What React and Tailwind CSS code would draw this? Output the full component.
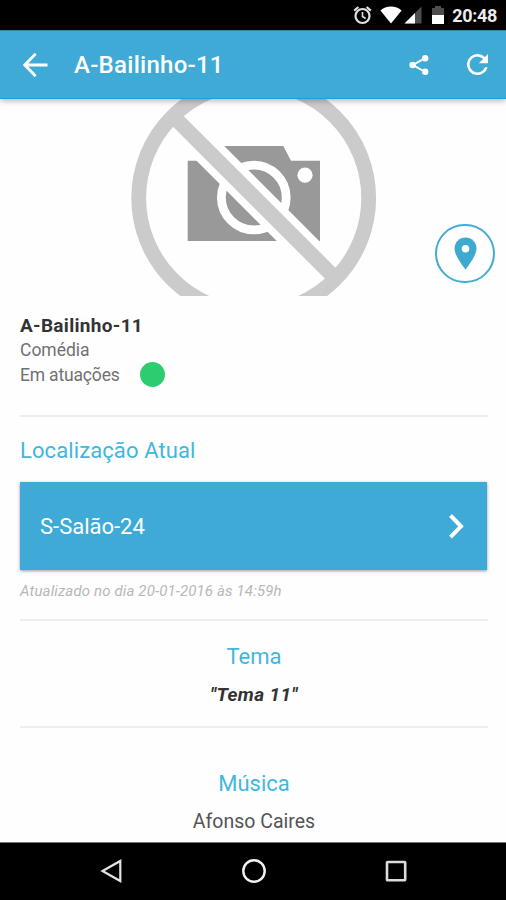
function StatusBar() {
  return (
    <div className="flex h-[30px] shrink-0 items-center justify-end bg-black pr-[9px] text-white">
      {/* Alarm */}
      <svg className="mr-[8px] h-[20px] w-[19px]" viewBox="0 0 19 20" fill="none" stroke="#e0e0e0">
        <circle cx="9.5" cy="11" r="7" strokeWidth="2.2" />
        <path d="M1.2 5.6 5.4 2M17.8 5.6 13.6 2" strokeWidth="2.2" />
        <path d="M9.5 7v4.5l3.2 2" strokeWidth="1.6" />
      </svg>
      {/* Wifi */}
      <svg className="h-[18px] w-[22px]" viewBox="0 0 22 18" fill="#fff">
        <path d="M11 17.6.4 4.5C3.2 1.9 7 .6 11 .6s7.8 1.3 10.6 3.9z" />
      </svg>
      {/* Signal */}
      <svg className="ml-[2px] h-[18px] w-[18px]" viewBox="0 0 18 18">
        <path d="M17.5.5v17H.5z" fill="#4d4d4d" />
        <path d="M11 7v10.5H.5z" fill="#fff" />
      </svg>
      {/* Battery */}
      <svg className="ml-[10px] h-[18px] w-[12px]" viewBox="0 0 12 18">
        <path d="M3 0h6v2h3v7H0V2h3z" fill="#4d4d4d" />
        <path d="M0 9h12v9H0z" fill="#fff" />
      </svg>
      <span className="ml-[8px] mt-[2px] text-[18px] font-bold leading-none tracking-[-0.35px] text-[#ececec]">20:48</span>
    </div>
  );
}

function Header() {
  return (
    <header className="relative z-10 flex h-[69px] shrink-0 items-center border-b border-[#1ba3d0] border-t border-t-[#3289ad] bg-[#3eaad5] pl-[23px] pr-[18px] text-white shadow-[0_2px_6px_rgba(0,0,0,0.28)]">
      <svg className="h-[26px] w-[25px]" viewBox="0 0 25 26" fill="none" stroke="#fff" strokeWidth="2.8">
        <path d="M24.5 13H2M12.7 1.8 1.8 13l10.9 11.2" />
      </svg>
      <h1 className="ml-[26px] mt-[1px] text-[24px] font-medium leading-none tracking-[0.27px]">A-Bailinho-11</h1>
      {/* Share */}
      <svg className="ml-auto h-[22px] w-[20px]" viewBox="0 0 20 22" fill="#fff">
        <path d="M16 4.2 4 11l12 6.8" fill="none" stroke="#fff" strokeWidth="2" />
        <circle cx="16.2" cy="4.2" r="3.2" />
        <circle cx="3.6" cy="11" r="3.2" />
        <circle cx="16.2" cy="17.8" r="3.2" />
      </svg>
      {/* Refresh */}
      <svg className="ml-[38px] h-[21px] w-[21px]" viewBox="4 4 16 16" fill="#fff">
        <path d="M17.65 6.35A7.958 7.958 0 0 0 12 4a8 8 0 1 0 7.73 10h-2.08A6 6 0 1 1 12 6c1.66 0 3.14.69 4.22 1.78L13 11h7V4z" />
      </svg>
    </header>
  );
}

function PhotoPlaceholder() {
  return (
    <div className="relative h-[197px] shrink-0">
      <svg className="block h-[197px] w-[506px]" viewBox="0 99 506 197">
        <path d="M187.7 160.7H218l-8-14.7h73.3l7.7 14.700h29V241H187.7z" fill="#999" />
        <circle cx="253.8" cy="197.5" r="32.4" fill="none" stroke="#fff" strokeWidth="8.8" />
        <circle cx="305" cy="175.2" r="7.6" fill="#fff" />
        <path d="M170 113 337 280" stroke="#fff" strokeWidth="30" />
        <path d="M170 113 337 280" stroke="#cbcbcb" strokeWidth="15.2" />
        <circle cx="253.7" cy="198" r="115" fill="none" stroke="#cbcbcb" strokeWidth="14.8" />
      </svg>
      <button className="absolute left-[435px] top-[125px] flex h-[59px] w-[60px] items-center justify-center rounded-full border-2 border-[#45abd0] bg-white">
        <svg className="h-[33px] w-[23px]" viewBox="0 0 23 33">
          <path d="M11.5.5C5.4.5.5 5.300.5 11.5c0 7.8 11 21 11 21s11-13.2 11-21c0-6.2-4.9-11-11-11z" fill="#3eaad0" />
          <circle cx="11.500" cy="11.8" r="3.8" fill="#fff" />
        </svg>
      </button>
    </div>
  );
}

function NavBar() {
  return (
    <nav className="flex h-[58px] shrink-0 items-center justify-between border-t border-[#777] bg-black pl-[100px] pr-[98px]">
      <svg className="-mt-[2px] h-[26px] w-[24px]" viewBox="0 0 24 26" fill="none" stroke="#e4e4e4" strokeWidth="2.2">
        <path d="M20.3 3v20L2.5 13z" />
      </svg>
      <svg className="-mt-[2px] h-[26px] w-[26px]" viewBox="0 0 26 26" fill="none" stroke="#f2f2f2" strokeWidth="2.4">
        <circle cx="13" cy="13" r="10.7" />
      </svg>
      <svg className="-mt-[2px] h-[24px] w-[24px]" viewBox="0 0 24 24" fill="none" stroke="#dcdcdc" strokeWidth="2.6">
        <rect x="3" y="3" width="18.2" height="18.2" rx="0.5" />
      </svg>
    </nav>
  );
}

export default function App() {
  return (
    <div className="flex h-[900px] w-[506px] flex-col overflow-hidden bg-[#fefefe] font-['Roboto',sans-serif]">
      <StatusBar />
      <Header />
      <PhotoPlaceholder />

      <main className="flex min-h-0 flex-1 flex-col pl-5 pr-[18px]">
        <section className="h-[121px] shrink-0 border-b-2 border-[#eeeeee] pt-[17px] text-[17.5px] leading-[24px] text-[#717171]">
          <h2 className="text-[19px] font-bold leading-[25px] tracking-[0.32px] text-[#333]">A-Bailinho-11</h2>
          <p>Comédia</p>
          <div className="flex items-center">
            <span className="tracking-[-0.17px]">Em atuações</span>
            <span className="ml-[20px] h-[25px] w-[25px] rounded-full bg-[#2ecc71]" />
          </div>
        </section>

        <section className="h-[204px] shrink-0 border-b-2 border-[#eeeeee] pt-[20px]">
          <h3 className="text-[22px] leading-[28px] tracking-[0.1px] text-[#42b7dc]">Localização Atual</h3>
          <button className="mt-[17px] flex h-[88px] w-[467px] items-center justify-between bg-[#3eaad5] pl-5 pr-[22px] text-[22px] text-white shadow-[0_1px_3px_rgba(0,0,0,0.4)]">
            <span>S-Salão-24</span>
            <svg className="h-[27px] w-[17px]" viewBox="0 0 17 27" fill="none" stroke="#fff" strokeWidth="4">
              <path d="M2.5 2.5 13 13.3 2.5 24.2" />
            </svg>
          </button>
          <p className="mt-[12px] text-[15px] italic leading-[18px] tracking-[0.14px] text-[#b8b8b8]">Atualizado no dia 20-01-2016 às 14:59h</p>
        </section>

        <section className="h-[107px] shrink-0 border-b-2 border-[#eeeeee] pt-[22px] text-center">
          <h3 className="text-[22px] leading-[28px] text-[#42b7dc]">Tema</h3>
          <p className="mt-[12px] text-[19px] font-bold italic leading-[24px] tracking-[0.4px] text-[#333]">"Tema 11"</p>
        </section>

        <section className="pt-[42px] text-center">
          <h3 className="text-[22px] leading-[28px] text-[#42b7dc]">Música</h3>
          <p className="mt-[11px] text-[19.5px] leading-[26px] text-[#555]">Afonso Caires</p>
        </section>
      </main>

      <NavBar />
    </div>
  );
}
